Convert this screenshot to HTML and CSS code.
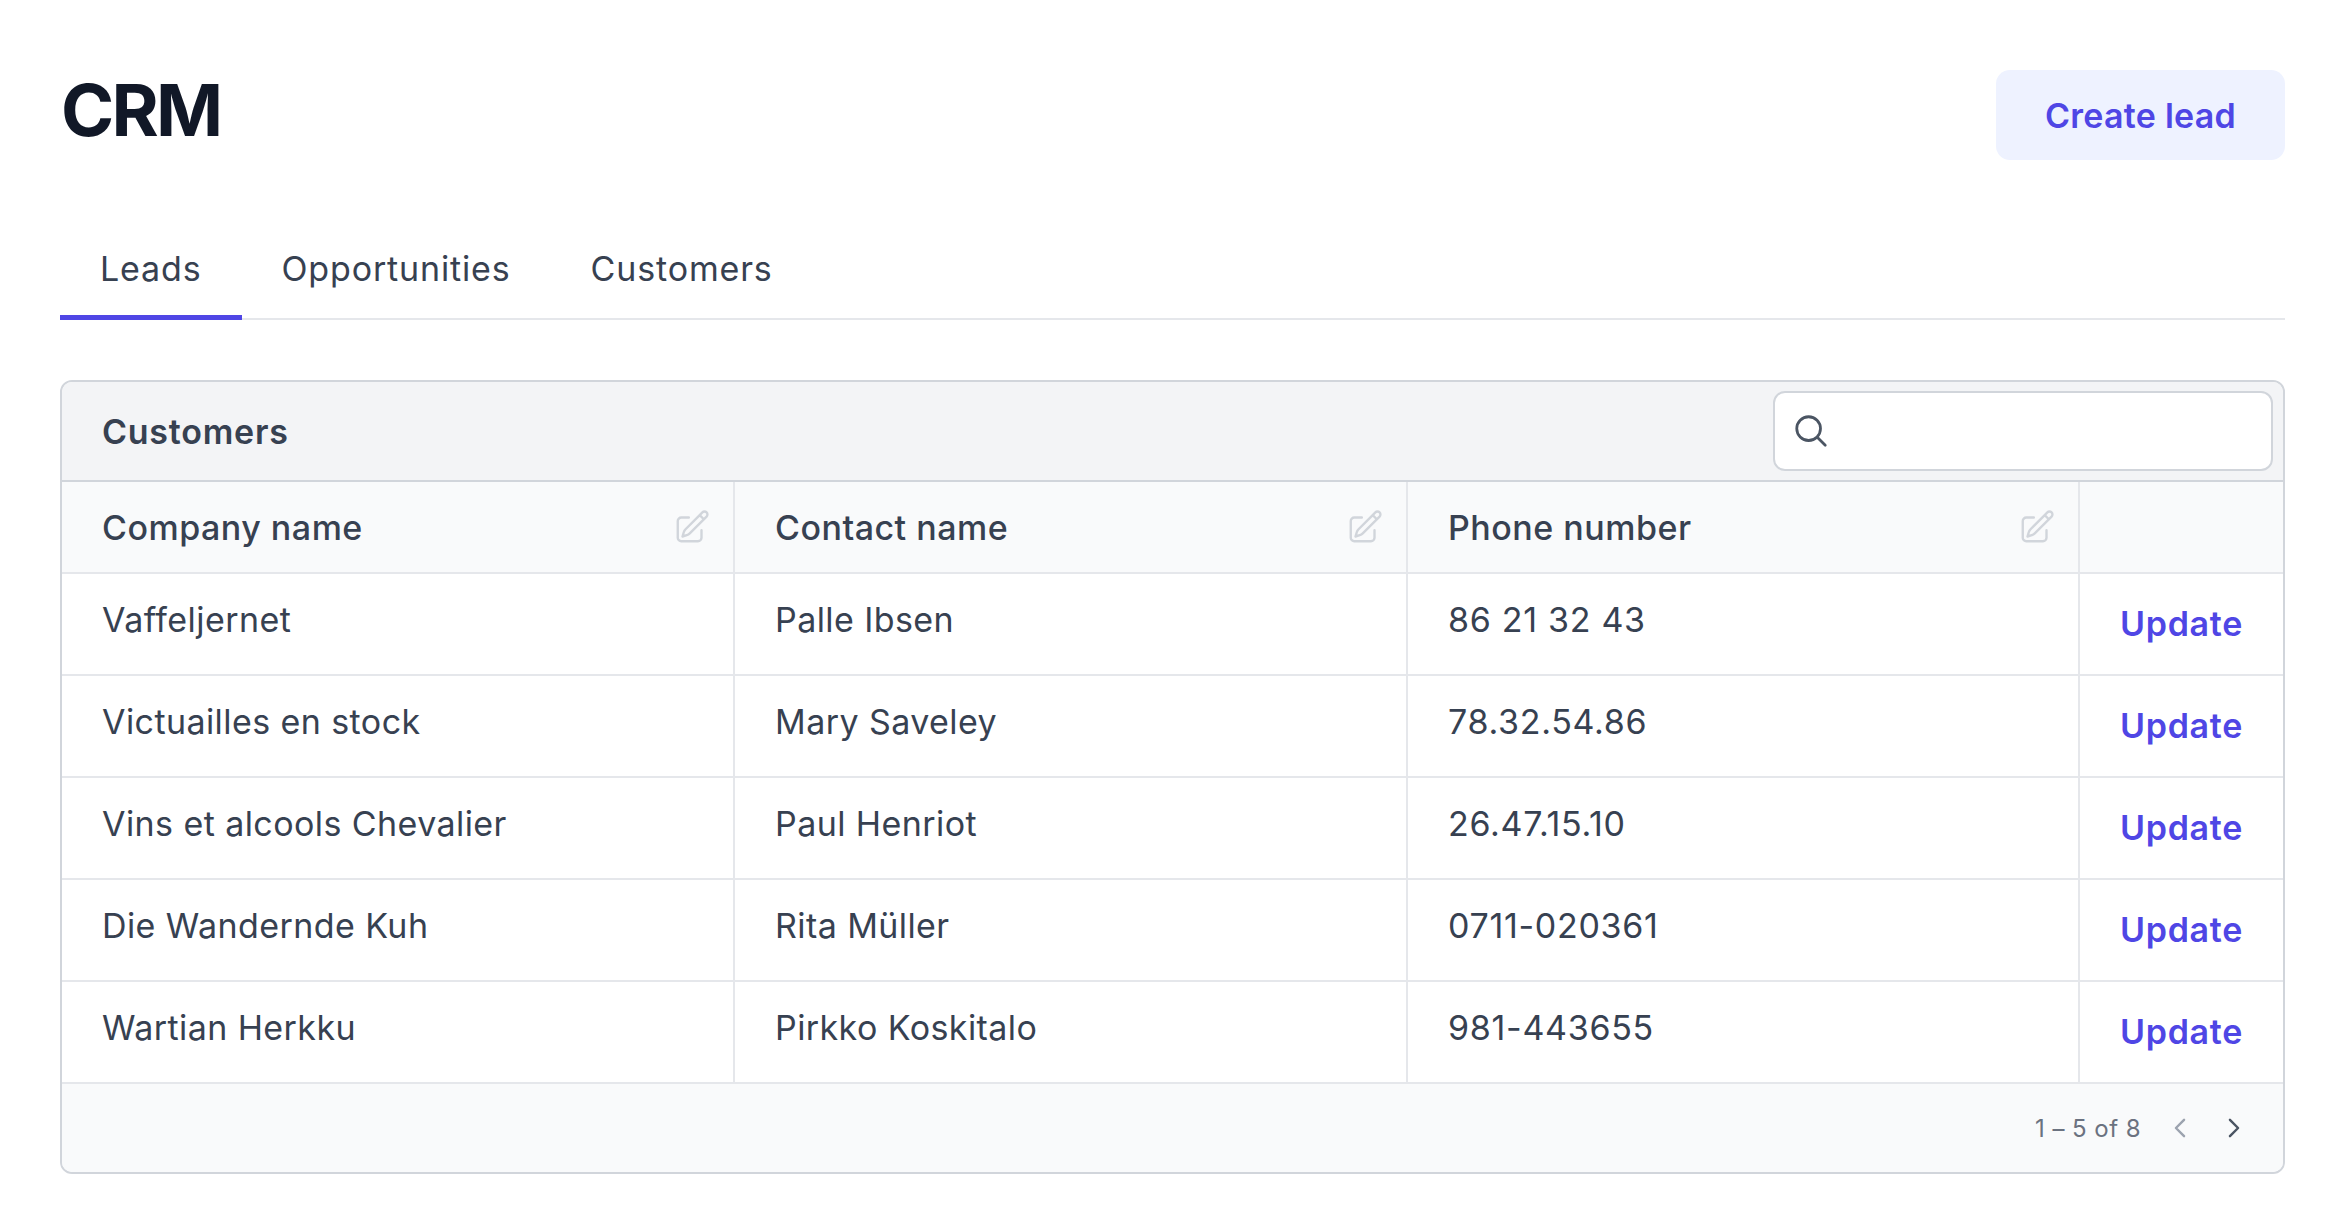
FILE: index.html
```html
<!DOCTYPE html>
<html lang="en">
<head>
<meta charset="utf-8">
<title>CRM</title>
<link rel="stylesheet" href="styles.css">
</head>
<body>
<main class="page">
  <header class="top">
    <h1 class="title">CRM</h1>
    <button class="create">Create lead</button>
  </header>
  <nav class="tabs">
    <a class="tab active">Leads</a>
    <a class="tab">Opportunities</a>
    <a class="tab">Customers</a>
  </nav>
  <section class="card">
    <div class="toolbar">
      <h2 class="card-title">Customers</h2>
      <div class="search">
        <svg class="search-icon" viewBox="0 0 24 24" fill="none" stroke="currentColor" stroke-width="1.75" stroke-linecap="round" stroke-linejoin="round"><path d="M21 21l-5.197-5.197m0 0A7.5 7.5 0 105.196 5.196a7.5 7.5 0 0010.607 10.607z"/></svg>
      </div>
    </div>
    <div class="row head">
      <div class="cell">Company name<svg class="edit" viewBox="0 0 24 24" fill="none" stroke="currentColor" stroke-width="1.5" stroke-linecap="round" stroke-linejoin="round"><path d="M16.862 4.487l1.687-1.688a1.875 1.875 0 112.652 2.652L10.582 16.07a4.5 4.5 0 01-1.897 1.13L6 18l.8-2.685a4.5 4.5 0 011.13-1.897l8.932-8.931zm0 0L19.5 7.125M18 14v4.75A2.25 2.25 0 0115.75 21H5.25A2.25 2.25 0 013 18.75V8.25A2.25 2.25 0 015.25 6H10"/></svg></div>
      <div class="cell">Contact name<svg class="edit" viewBox="0 0 24 24" fill="none" stroke="currentColor" stroke-width="1.5" stroke-linecap="round" stroke-linejoin="round"><path d="M16.862 4.487l1.687-1.688a1.875 1.875 0 112.652 2.652L10.582 16.07a4.5 4.5 0 01-1.897 1.13L6 18l.8-2.685a4.5 4.5 0 011.13-1.897l8.932-8.931zm0 0L19.5 7.125M18 14v4.75A2.25 2.25 0 0115.75 21H5.25A2.25 2.25 0 013 18.75V8.25A2.25 2.25 0 015.25 6H10"/></svg></div>
      <div class="cell">Phone number<svg class="edit" viewBox="0 0 24 24" fill="none" stroke="currentColor" stroke-width="1.5" stroke-linecap="round" stroke-linejoin="round"><path d="M16.862 4.487l1.687-1.688a1.875 1.875 0 112.652 2.652L10.582 16.07a4.5 4.5 0 01-1.897 1.13L6 18l.8-2.685a4.5 4.5 0 011.13-1.897l8.932-8.931zm0 0L19.5 7.125M18 14v4.75A2.25 2.25 0 0115.75 21H5.25A2.25 2.25 0 013 18.75V8.25A2.25 2.25 0 015.25 6H10"/></svg></div>
      <div class="cell"></div>
    </div>
    <div class="row"><div class="cell">Vaffeljernet</div><div class="cell">Palle Ibsen</div><div class="cell num">86 21 32 43</div><div class="cell"><a class="update">Update</a></div></div>
    <div class="row"><div class="cell">Victuailles en stock</div><div class="cell">Mary Saveley</div><div class="cell num">78.32.54.86</div><div class="cell"><a class="update">Update</a></div></div>
    <div class="row"><div class="cell">Vins et alcools Chevalier</div><div class="cell">Paul Henriot</div><div class="cell num">26.47.15.10</div><div class="cell"><a class="update">Update</a></div></div>
    <div class="row"><div class="cell">Die Wandernde Kuh</div><div class="cell">Rita Müller</div><div class="cell num">0711-020361</div><div class="cell"><a class="update">Update</a></div></div>
    <div class="row"><div class="cell">Wartian Herkku</div><div class="cell">Pirkko Koskitalo</div><div class="cell num">981-443655</div><div class="cell"><a class="update">Update</a></div></div>
    <footer class="pager">
      <span class="count">1 – 5 of 8</span>
      <svg class="chev prev" viewBox="0 0 24 24" fill="none" stroke="currentColor" stroke-width="2.25" stroke-linecap="round" stroke-linejoin="round"><path d="M15.75 19.5L8.25 12l7.5-7.5"/></svg>
      <svg class="chev next" viewBox="0 0 24 24" fill="none" stroke="currentColor" stroke-width="2.25" stroke-linecap="round" stroke-linejoin="round"><path d="M8.25 4.5l7.5 7.5-7.5 7.5"/></svg>
    </footer>
  </section>
</main>
</body>
</html>
```
FILE: styles.css
```css
* { box-sizing: border-box; }
html, body { margin: 0; padding: 0; background: #fff; }
body { font-family: Inter, "Liberation Sans", sans-serif; color: #374151; }
.page { padding: 70px 47px 0 60px; }
.top { display: flex; justify-content: space-between; align-items: flex-start; height: 90px; }
.title { margin: 0 0 0 1px; font-size: 72px; line-height: 80px; font-weight: 700; color: #111827; letter-spacing: -2.8px; }
.create { width: 289px; height: 90px; border: 0; border-radius: 14px; background: #eef2ff; color: #4f46e5; font: 600 34px Inter, sans-serif; letter-spacing: 0.25px; }
.tabs { display: flex; margin-top: 70px; height: 90px; border-bottom: 2px solid #e5e7eb; }
.tab { padding: 0 40px; height: 90px; line-height: 78px; font-size: 34px; letter-spacing: 0.85px; color: #374151; }
.tab.active { border-bottom: 5px solid #4f46e5; }
.card { margin-top: 60px; border: 2px solid #d1d5db; border-radius: 12px; overflow: hidden; height: 794px; background: #fff; }
.toolbar { display: flex; justify-content: space-between; align-items: center; height: 100px; background: #f3f4f6; border-bottom: 2px solid #d1d5db; padding: 0 10px 0 40px; }
.card-title { margin: 0; font-size: 34px; font-weight: 600; letter-spacing: 0.75px; color: #374151; }
.search { display: flex; align-items: center; width: 500px; height: 80px; background: #fff; border: 2px solid #d1d5db; border-radius: 12px; padding-left: 17px; }
.search-icon { width: 38px; height: 38px; color: #4b5563; }
.row { display: grid; grid-template-columns: 673px 673px 672px 1fr; height: 102px; border-bottom: 2px solid #e5e7eb; }
.row.head { height: 92px; background: #f9fafb; }
.cell { padding: 24px 40px 0; font-size: 34px; line-height: 44px; letter-spacing: 0.42px; border-right: 2px solid #e5e7eb; color: #374151; }
.cell:last-child { border-right: 0; }
.num { letter-spacing: 0.7px; }
.head .cell { font-weight: 500; letter-spacing: 0.5px; display: flex; justify-content: space-between; }
.edit { width: 38px; height: 38px; color: #d1d5db; margin: 2px -18px 0 0; }
.update { display: block; margin-top: 4px; font-size: 34px; font-weight: 600; letter-spacing: 0.7px; color: #4f46e5; }
.pager { display: flex; align-items: center; justify-content: flex-end; height: 90px; background: #f9fafb; padding: 0 36px 2px 0; color: #6b7280; }
.count { font-size: 24px; letter-spacing: 0.45px; margin-right: 26px; }
.chev { width: 26px; height: 26px; }
.prev { color: #9ca3af; margin-right: 28px; }
.next { color: #4b5563; }
```
